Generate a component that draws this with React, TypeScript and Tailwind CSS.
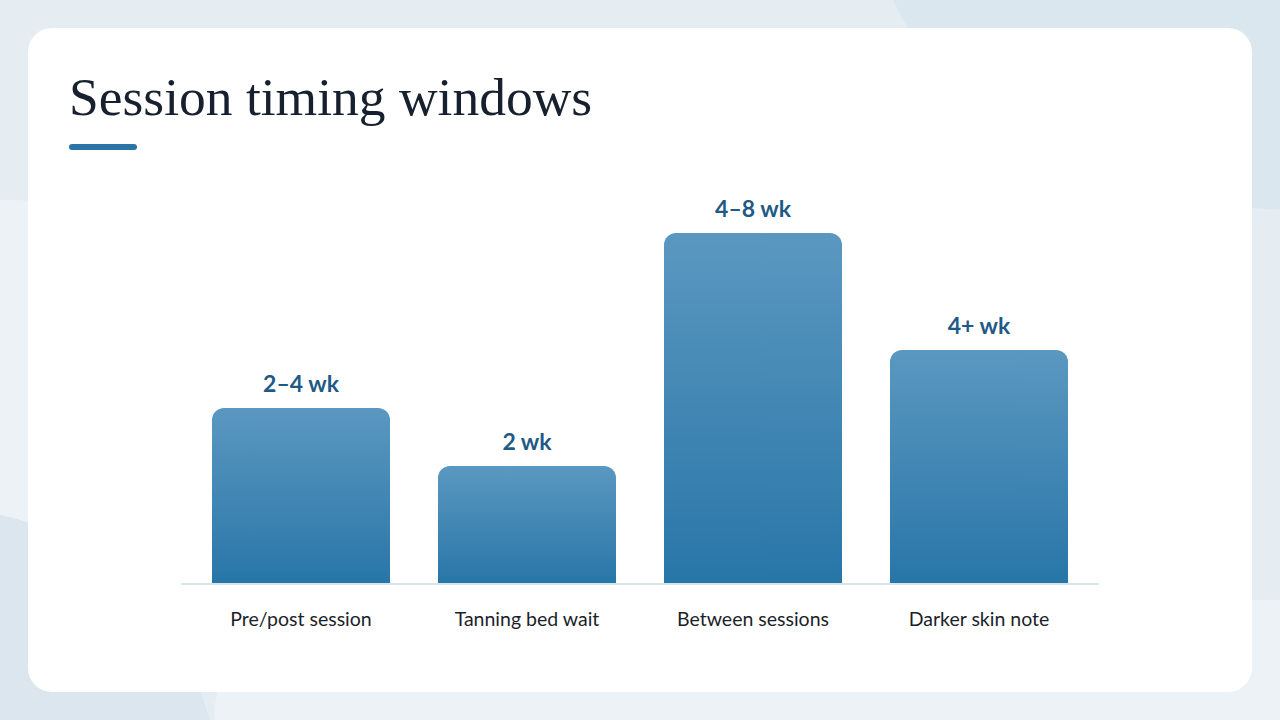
const bars = [
  { label: "Pre/post session", value: "2–4 wk", height: 175 },
  { label: "Tanning bed wait", value: "2 wk", height: 117 },
  { label: "Between sessions", value: "4–8 wk", height: 350 },
  { label: "Darker skin note", value: "4+ wk", height: 233 },
];

function Bar({ value, height }: { value: string; height: number }) {
  return (
    <div className="flex w-[178px] flex-col items-center">
      <div className="mb-[11px] text-[23px] font-bold leading-[28px] text-[#1f5a86]">
        {value}
      </div>
      <div
        className="w-full rounded-t-[12px] bg-gradient-to-b from-[#5a98c0] to-[#2776a8]"
        style={{ height }}
      />
    </div>
  );
}

export default function App() {
  return (
    <div
      className="relative h-[720px] w-[1280px] overflow-hidden bg-[#e5edf3]"
      style={{ fontFamily: "Lato, 'Open Sans', sans-serif" }}
    >
      {/* soft background shapes */}
      <div className="absolute left-[-200px] top-[200px] h-[420px] w-[420px] rounded-full bg-[#edf2f6]" />
      <div className="absolute left-[870px] top-[-410px] h-[620px] w-[860px] rounded-[50%] bg-[#dbe7ef]" />
      <div className="absolute left-[-320px] top-[510px] h-[580px] w-[540px] rounded-[50%] bg-[#dbe6ee]" />
      <div className="absolute left-[214px] top-[600px] h-[300px] w-[1200px] rounded-tl-[120px] bg-[#edf2f6]" />

      <div className="relative z-10 m-[28px] flex h-[664px] flex-col rounded-[24px] bg-white pl-[41px] pt-[43px]">
        <h1
          className="text-[53.5px] font-normal leading-[52px] text-[#17202f]"
          style={{ fontFamily: "'Liberation Serif', 'DejaVu Serif', serif" }}
        >
          Session timing windows
        </h1>
        <div className="mt-[21px] h-[6px] w-[68px] rounded-full bg-[#2a74a8]" />

        <div className="ml-[112px] flex w-[918px] flex-col">
          <div className="flex h-[435px] items-end justify-center gap-12 border-b-2 border-[#d6e4ec]">
            {bars.map((b) => (
              <Bar key={b.label} value={b.value} height={b.height} />
            ))}
          </div>
          <div className="mt-[22px] flex justify-center gap-12">
            {bars.map((b) => (
              <div
                key={b.label}
                className="w-[178px] text-center text-[19.5px] leading-[24px] text-[#1c1f2a]"
              >
                {b.label}
              </div>
            ))}
          </div>
        </div>
      </div>
    </div>
  );
}
